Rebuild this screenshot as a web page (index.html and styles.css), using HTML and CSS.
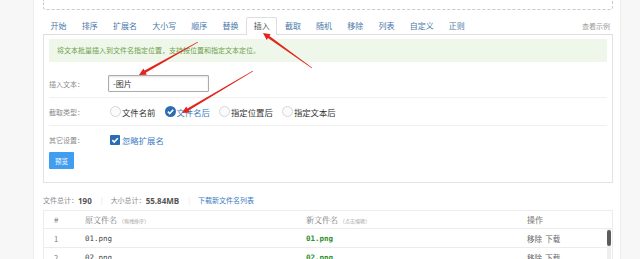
FILE: index.html
```html
<!DOCTYPE html>
<html lang="zh-CN">
<head>
<meta charset="utf-8">
<title>插入</title>
<link rel="stylesheet" href="styles.css">
</head>
<body>
<div class="layout">
  <aside class="side side-left"></aside>
  <main class="main">
    <div class="dropzone"></div>
    <nav class="tabs">
      <span class="tab">开始</span>
      <span class="tab">排序</span>
      <span class="tab">扩展名</span>
      <span class="tab">大小写</span>
      <span class="tab">顺序</span>
      <span class="tab">替换</span>
      <span class="tab active">插入</span>
      <span class="tab">截取</span>
      <span class="tab">随机</span>
      <span class="tab">移除</span>
      <span class="tab">列表</span>
      <span class="tab">自定义</span>
      <span class="tab">正则</span>
      <span class="tab-extra">查看示例</span>
    </nav>
    <section class="pane">
      <div class="alert">将文本批量插入到文件名指定位置，支持按位置和指定文本定位。</div>
      <div class="form-row first">
        <span class="label">插入文本：</span>
        <input class="text-input" type="text" value="-图片">
      </div>
      <div class="form-row">
        <span class="label">截取类型：</span>
        <span class="radio"></span><span class="opt">文件名前</span>
        <span class="radio checked"><svg viewBox="0 0 10 10" width="10" height="10"><path d="M2.6 5.1 L4.3 6.8 L7.5 3.4" fill="none" stroke="#fff" stroke-width="1.5"/></svg></span><span class="opt opt-on">文件名后</span>
        <span class="radio"></span><span class="opt">指定位置后</span>
        <span class="radio"></span><span class="opt">指定文本后</span>
      </div>
      <div class="form-row last">
        <span class="label">其它设置：</span>
        <span class="checkbox"><svg viewBox="0 0 10 10" width="10" height="10"><path d="M2.3 5.1 L4.2 7 L7.8 3.2" fill="none" stroke="#fff" stroke-width="1.6"/></svg></span><span class="opt opt-on">忽略扩展名</span>
      </div>
      <button class="btn">预览</button>
    </section>
    <div class="stats">
      <span class="stat-label">文件总计：</span><b class="stat-num">190</b>
      <span class="stat-sep">|</span>
      <span class="stat-label">大小总计：</span><b class="stat-num">55.84MB</b>
      <span class="stat-sep">|</span>
      <span class="stat-link">下载新文件名列表</span>
    </div>
    <div class="table">
      <div class="thead">
        <span class="cell">#</span>
        <span class="cell serif">原文件名 <small>（拖拽排序）</small></span>
        <span class="cell serif">新文件名 <small>（点击编辑）</small></span>
        <span class="cell">操作</span>
      </div>
      <div class="tbody">
        <div class="rows">
          <div class="row">
            <span class="cell idx">1</span>
            <span class="cell mono">01.png</span>
            <span class="cell mono new">01.png</span>
            <span class="cell ops">移除&nbsp;&nbsp;下载</span>
          </div>
          <div class="row">
            <span class="cell idx">2</span>
            <span class="cell mono">02.png</span>
            <span class="cell mono new">02.png</span>
            <span class="cell ops">移除&nbsp;&nbsp;下载</span>
          </div>
        </div>
        <div class="scrollbar"><div class="thumb"></div></div>
      </div>
    </div>
  </main>
  <aside class="side side-right"></aside>
</div>
<svg class="arrows" width="640" height="259" viewBox="0 0 640 259">
  <polygon points="312.2,67.7 269.4,36.1 270.7,34.3 263,33 266.7,40 268,38.1 311.8,68.3" />
  <polygon points="197.8,41.65 144.5,70.55 143.4,68.5 139,75 146.8,74.7 145.7,72.65 198.2,42.35" />
  <polygon points="252.8,70.66 187.4,108.4 186.2,106.4 182,113 189.8,112.4 188.6,110.4 253.2,71.34" />
</svg>
</body>
</html>
```

FILE: styles.css
```css
html, body {
  margin: 0;
  padding: 0;
  height: 259px;
  overflow: hidden;
  background: #f7f7f7;
  font-family: "Noto Sans CJK SC", "Noto Sans", sans-serif;
  color: #333;
}

.layout {
  display: flex;
  height: 259px;
}

.side {
  background: #f7f7f7;
}
.side-left {
  width: 33px;
  border-right: 1px solid #ececec;
}
.side-right {
  flex: 1;
  border-left: 1px solid #ececec;
}

.main {
  width: 570px;
  padding: 0 7px 0 9px;
  background: #fff;
}

.dropzone {
  height: 9px;
  border: 1px dashed #c9c9c9;
  border-top: 0;
  border-radius: 0 0 3px 3px;
}

.tabs {
  display: flex;
  align-items: flex-end;
  margin-top: 7px;
  height: 17px;
  border-bottom: 1px solid #dedede;
}

.tab {
  font-size: 8px;
  line-height: 16px;
  height: 16px;
  padding: 0 6.6px;
  border: 1px solid transparent;
  border-bottom: 0;
  color: #4a78a8;
  white-space: nowrap;
}

.tab.active {
  color: #555;
  background: #fff;
  border-color: #dedede;
  border-radius: 2px 2px 0 0;
  height: 17px;
  margin-bottom: -1px;
}

.tab-extra {
  margin-left: auto;
  font-size: 7px;
  line-height: 16px;
  color: #9a9a9a;
  padding-right: 3px;
  align-self: center;
}

.pane {
  border: 1px solid #e2e2e2;
  border-top: 0;
  padding: 4px 5px 13px;
}

.alert {
  height: 23px;
  line-height: 23px;
  padding: 0 8px;
  background: #eff7ea;
  color: #6ea24e;
  font-size: 7px;
}

.form-row {
  display: flex;
  align-items: center;
  height: 17px;
  padding: 5px 0;
  border-bottom: 1px solid #f0f0f0;
}
.form-row.first {
  margin-top: 8px;
}
.form-row.last {
  border-bottom: 0;
  padding-bottom: 0;
}

.label {
  width: 59px;
  font-size: 7px;
  color: #8c8c8c;
  white-space: nowrap;
}

.text-input {
  box-sizing: border-box;
  width: 101px;
  height: 17px;
  margin: 0;
  padding: 0 4px;
  border: 1px solid #ababab;
  border-radius: 1px;
  box-shadow: inset 0 1px 2px rgba(0, 0, 0, 0.12);
  font-family: "Noto Sans CJK SC", sans-serif;
  font-size: 8px;
  color: #333;
  outline: none;
}

.radio {
  box-sizing: border-box;
  width: 11px;
  height: 11px;
  border-radius: 50%;
  border: 1px solid #d6d6d6;
  background: #fbfbfb;
  margin: 0 1px 0 2px;
  display: flex;
  align-items: center;
  justify-content: center;
}
.radio.checked {
  border: 0;
  background: #2a6db0;
}
.radio svg {
  width: 11px;
  height: 11px;
}

.checkbox {
  width: 10px;
  height: 10px;
  margin: 0 2px 0 2px;
  background: #2a6db0;
  border-radius: 1px;
  display: flex;
}

.opt {
  font-size: 8.4px;
  color: #333;
  margin-right: 7px;
  white-space: nowrap;
}
.opt-on {
  color: #3a7dbf;
}

.btn {
  display: block;
  width: 25px;
  height: 17px;
  margin-top: 4px;
  padding: 0;
  border: 0;
  border-radius: 1px;
  background: #419df0;
  color: #fff;
  font-family: "Noto Sans CJK SC", sans-serif;
  font-size: 6.5px;
}

.stats {
  display: flex;
  align-items: center;
  margin-top: 11px;
  height: 12px;
  font-size: 7px;
  white-space: nowrap;
}
.stat-label {
  color: #8c8c8c;
}
.stat-num {
  color: #555;
  font-family: "Open Sans", "Noto Sans", sans-serif;
  font-weight: 700;
  font-size: 8px;
}
.stat-sep {
  color: #ddd;
  margin: 0 8px 0 9px;
}
.stat-link {
  color: #3a7dbf;
}

.table {
  margin-top: 4px;
  border: 1px solid #ececec;
  border-bottom: 0;
}

.thead, .row {
  display: grid;
  grid-template-columns: 31px 221px 221px 1fr;
  align-items: center;
}

.thead {
  height: 17px;
  border-bottom: 1px solid #ececec;
  font-size: 8px;
  color: #777;
}

.cell {
  padding-left: 10px;
  white-space: nowrap;
}

.serif {
  font-family: "Noto Serif CJK SC", "Liberation Serif", "Noto Sans CJK SC", serif;
}
.serif small {
  font-size: 5px;
  color: #999;
}

.tbody {
  display: flex;
}
.rows {
  flex: 1;
}
.row {
  height: 18px;
  border-bottom: 1px solid #ececec;
  font-size: 8px;
}
.idx {
  color: #777;
  font-size: 7.5px;
}
.mono {
  font-family: "DejaVu Sans Mono", "Liberation Mono", monospace;
  font-size: 7.5px;
  color: #444;
}
.mono.new {
  color: #2e8f2e;
  font-weight: 700;
}
.ops {
  font-size: 7.5px;
  color: #666;
}

.scrollbar {
  width: 4px;
  margin-right: 1px;
  background: #eeeeee;
}
.thumb {
  height: 16px;
  margin-top: 1px;
  border-radius: 2px;
  background: #5c5c5c;
}

.arrows {
  position: absolute;
  left: 0;
  top: 0;
  pointer-events: none;
}
.arrows polygon {
  fill: #e3241b;
}
```
